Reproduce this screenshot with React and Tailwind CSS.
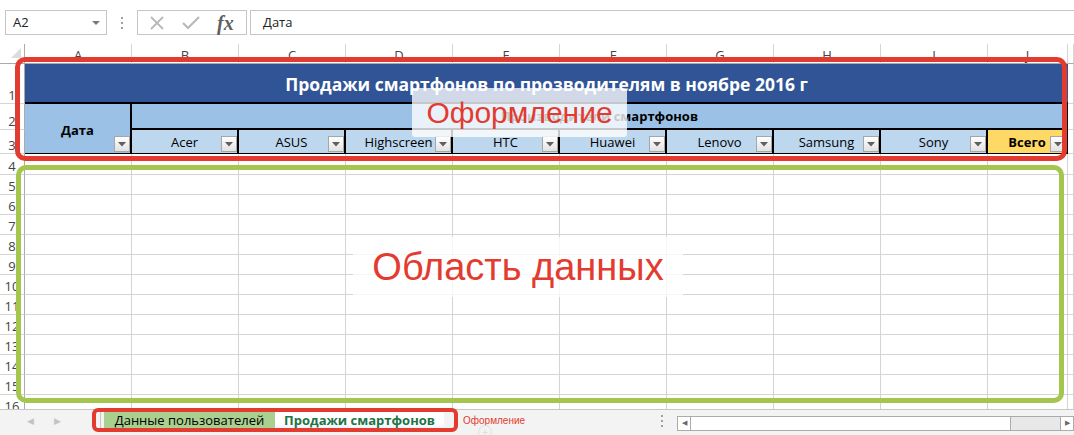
import React from 'react'

const UI_FONT = { fontFamily: '"Open Sans", "Liberation Sans", sans-serif' }
const ARIAL = { fontFamily: '"Liberation Sans", Arial, sans-serif' }

const LETTERS = ['A', 'B', 'C', 'D', 'E', 'F', 'G', 'H', 'I', 'J', '']
const BRANDS = ['Acer', 'ASUS', 'Highscreen', 'HTC', 'Huawei', 'Lenovo', 'Samsung', 'Sony']

function FilterButton() {
  return (
    <span className="flex h-[16px] w-[16px] shrink-0 items-center justify-center border border-[#a6a6a6] bg-linear-to-b from-white to-[#e2e2e2]">
      <svg width="8" height="5" viewBox="0 0 8 5">
        <path d="M0 0h8L4 4.5z" fill="#5f5f5f" />
      </svg>
    </span>
  )
}

function VDots() {
  return (
    <div className="flex flex-col gap-[3px]">
      <span className="h-[2px] w-[2px] bg-[#a0a0a0]" />
      <span className="h-[2px] w-[2px] bg-[#a0a0a0]" />
      <span className="h-[2px] w-[2px] bg-[#a0a0a0]" />
    </div>
  )
}

function FormulaBar() {
  return (
    <div className="flex h-[44px] items-start bg-white pt-[10px]">
      <div className="ml-[5px] flex h-[25px] w-[102px] items-center justify-between border border-[#c6c6c6] pl-[7px] pr-[6px] text-[13px] text-[#222]">
        <span>A2</span>
        <svg width="8" height="4" viewBox="0 0 8 4">
          <path d="M0 0h8L4 4z" fill="#7a7a7a" />
        </svg>
      </div>
      <div className="flex h-[25px] w-[30px] items-center justify-center">
        <VDots />
      </div>
      <div className="flex h-[25px] w-[110px] items-center border border-[#c6c6c6] pl-[12px]">
        <svg width="14" height="14" viewBox="0 0 14 14">
          <path d="M1 1l12 12M13 1L1 13" stroke="#b9b9b9" strokeWidth="1.8" />
        </svg>
        <svg className="ml-[18px]" width="18" height="14" viewBox="0 0 18 14">
          <path d="M1 7l5 5L17 1" stroke="#b9b9b9" strokeWidth="2.2" fill="none" />
        </svg>
        <span
          className="ml-[17px] text-[20px] font-bold italic leading-none text-[#606060]"
          style={{ fontFamily: '"Liberation Serif", "Times New Roman", serif' }}
        >
          fx
        </span>
      </div>
      <div className="ml-[3px] flex h-[25px] flex-1 items-center border border-r-0 border-[#c6c6c6] pl-[12px] text-[13px] text-[#222]">
        Дата
      </div>
    </div>
  )
}

function RowNum({ n }) {
  return (
    <div className="flex items-end justify-center border-b border-r border-b-[#d4d4d4] border-r-[#ababab] pb-[1px] text-[13px] leading-none text-[#444]">
      {n}
    </div>
  )
}

function Blank() {
  return <div className="border-b border-r border-[#d4d4d4]" />
}

function Sheet() {
  const dataRows = [4, 5, 6, 7, 8, 9, 10, 11, 12, 13, 14, 15, 16]
  return (
    <div className="relative h-[365px] overflow-hidden bg-white">
      <div className="grid grid-cols-[25px_repeat(9,107px)_80px_1fr] grid-rows-[20px_40px_26px_24px_21px_repeat(12,20px)]">
        {/* column headers */}
        <div className="relative border-b border-r border-[#ababab]">
          <svg className="absolute bottom-[5px] right-[3px]" width="10" height="10" viewBox="0 0 10 10">
            <path d="M10 0v10H0z" fill="#dcdcdc" />
          </svg>
        </div>
        {LETTERS.map((l, i) => (
          <div
            key={i}
            className="flex items-center justify-center border-b border-r border-b-[#ababab] border-r-[#d4d4d4] pt-[4px] text-[13px] text-[#444]"
          >
            {l}
          </div>
        ))}

        {/* row 1: title */}
        <RowNum n={1} />
        <div className="col-span-10 flex items-center justify-center border-b-2 border-black bg-[#305496] pt-[2px] text-[17.5px] font-bold text-white">
          Продажи смартфонов по прозводителям в ноябре 2016 г
        </div>
        <Blank />

        {/* row 2 */}
        <RowNum n={2} />
        <div className="row-span-2 grid grid-cols-[16px_1fr_16px] border-b border-r-2 border-black bg-[#9bc2e6]">
          <span />
          <span className="self-center pt-[4px] text-center text-[13px] font-bold text-black">Дата</span>
          <span className="mb-[1px] self-end">
            <FilterButton />
          </span>
        </div>
        <div className="col-span-9 flex items-center justify-center border-b-2 border-r border-black bg-[#9bc2e6] pt-[2px] text-[13px] font-bold text-black">
          Производители смартфонов
        </div>
        <Blank />

        {/* row 3: brands */}
        <RowNum n={3} />
        {BRANDS.map(b => (
          <div key={b} className="grid grid-cols-[16px_1fr_16px] border-b border-r-2 border-black bg-[#bdd7ee]">
            <span />
            <span className="self-center pt-[3px] text-center text-[13px] text-black">{b}</span>
            <span className="mb-[1px] self-end">
              <FilterButton />
            </span>
          </div>
        ))}
        <div className="grid grid-cols-[16px_1fr_16px] border-b border-r-2 border-black bg-[#ffd966]">
          <span />
          <span className="self-center pt-[3px] text-center text-[13px] font-bold text-black">Всего</span>
          <span className="mb-[1px] self-end">
            <FilterButton />
          </span>
        </div>
        <Blank />

        {/* empty rows */}
        {dataRows.map(r => (
          <React.Fragment key={r}>
            <RowNum n={r} />
            {LETTERS.map((_, i) => (
              <Blank key={i} />
            ))}
          </React.Fragment>
        ))}
      </div>

      {/* annotations */}
      <div className="absolute left-[15px] top-[13px] h-[104px] w-[1052px] rounded-[10px] border-[5px] border-[#e33b2f]" />
      <div
        className="absolute left-[412px] top-[44px] flex h-[49px] w-[215px] items-center justify-center rounded-[3px] bg-white/[0.78] text-[30px] text-[#e33b2f]"
        style={ARIAL}
      >
        Оформление
      </div>
      <div className="absolute left-[16px] top-[121px] h-[238px] w-[1048px] rounded-[10px] border-[5px] border-[#a4c64e]" />
      <div
        className="absolute left-[353px] top-[193px] flex h-[60px] w-[330px] items-center justify-center bg-white/80 text-[38px] text-[#e33b2f]"
        style={ARIAL}
      >
        Область данных
      </div>
    </div>
  )
}

function TabBar() {
  return (
    <div className="relative flex h-[26px] items-start border-t border-[#c6c6c6] bg-[#f3f3f3]">
      <div className="flex h-[22px] w-[100px] items-center gap-[20px] pl-[27px] text-[9px] text-[#c3c3c3]">
        <span>◀</span>
        <span>▶</span>
      </div>
      <div className="mt-[2px] h-[18px] w-px bg-[#c6c6c6]" />
      <div className="ml-[3px] mt-[2px] flex h-[18px] w-[171px] items-center justify-center bg-[#a9d08e] text-[13px] text-black">
        Данные пользователей
      </div>
      <div className="mt-[2px] flex h-[18px] w-[169px] items-center justify-center bg-linear-to-b from-white from-60% to-[#e8eef7] text-[13px] font-bold text-[#217346]">
        Продажи смартфонов
      </div>
      <div className="relative ml-[19px] mt-[3px] text-[10px] text-[#e33b2f]" style={ARIAL}>
        Оформление
        <span className="absolute left-[15px] top-[12px] flex h-[14px] w-[14px] items-center justify-center rounded-full border border-[#e0e0e0] text-[11px] leading-none text-[#e0e0e0]">
          +
        </span>
      </div>
      <div className="ml-auto mr-[14px] flex h-[22px] items-center">
        <VDots />
      </div>
      <div className="mt-[6px] flex h-[15px] w-[397px] border border-[#ababab]">
        <span className="flex w-[13px] items-center justify-center border-r border-[#ababab] bg-white text-[7px] text-[#6a6a6a]">◀</span>
        <span className="w-[320px] border-r border-[#ababab] bg-white" />
        <span className="flex-1 bg-[#e8e8e8]" />
        <span className="flex w-[13px] items-center justify-center border-l border-[#ababab] bg-white text-[7px] text-[#6a6a6a]">▶</span>
      </div>
      <div className="absolute left-[92px] top-[-2px] h-[24px] w-[366px] rounded-[6px] border-4 border-[#e33b2f]" />
    </div>
  )
}

export default function App() {
  return (
    <div className="h-[435px] w-[1074px] overflow-hidden bg-white" style={UI_FONT}>
      <FormulaBar />
      <Sheet />
      <TabBar />
    </div>
  )
}
